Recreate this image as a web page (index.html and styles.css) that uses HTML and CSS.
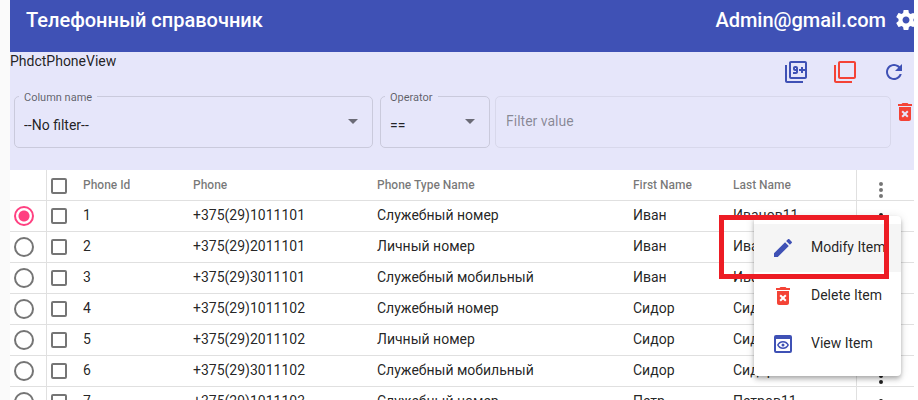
FILE: index.html
```html
<!DOCTYPE html>
<html lang="ru">
<head>
<meta charset="utf-8">
<title>Телефонный справочник</title>
<link rel="stylesheet" href="styles.css">
</head>
<body>
<svg class="defs" aria-hidden="true">
  <symbol id="i-more" viewBox="0 0 24 24"><path d="M12 8a2 2 0 1 0 0-4 2 2 0 0 0 0 4zm0 2a2 2 0 1 0 0 4 2 2 0 0 0 0-4zm0 6a2 2 0 1 0 0 4 2 2 0 0 0 0-4z"/></symbol>
  <symbol id="i-delete" viewBox="0 0 24 24"><path d="M6 19c0 1.100.9 2 2 2h8c1.100 0 2-.9 2-2V7H6v12zm2.460-7.120 1.410-1.410L12 12.590l2.120-2.120 1.410 1.410L13.410 14l2.120 2.120-1.410 1.410L12 15.410l-2.120 2.120-1.410-1.410L10.590 14l-2.130-2.120zM15.500 4l-1-1h-5l-1 1H5v2h14V4z"/></symbol>
</svg>
<header class="appbar">
  <h1 class="title">Телефонный справочник</h1>
  <span class="user">Admin@gmail.com</span>
  <button class="icon-btn settings" aria-label="Settings"><svg class="icon" viewBox="0 0 24 24"><path d="M19.430 12.980c.040-.320.070-.640.070-.980s-.030-.660-.070-.980l2.110-1.650c.190-.150.240-.420.120-.640l-2-3.460c-.120-.220-.390-.300-.610-.220l-2.490 1c-.520-.400-1.080-.730-1.690-.980l-.380-2.650C14.460 2.180 14.250 2 14 2h-4c-.250 0-.460.180-.490.420l-.380 2.650c-.610.250-1.170.590-1.690.980l-2.490-1c-.230-.090-.490 0-.610.220l-2 3.460c-.130.220-.070.490.120.640l2.110 1.650c-.040.320-.070.650-.070.980s.030.660.070.980l-2.110 1.650c-.190.150-.240.420-.120.640l2 3.460c.120.220.390.300.610.220l2.490-1c.520.400 1.080.730 1.690.980l.380 2.650c.030.240.240.420.490.420h4c.250 0 .460-.180.490-.420l.380-2.650c.610-.250 1.170-.590 1.690-.980l2.490 1c.230.090.490 0 .610-.220l2-3.460c.120-.220.070-.490-.120-.640l-2.110-1.650zM12 15.500c-1.930 0-3.500-1.570-3.500-3.500s1.570-3.500 3.500-3.500 3.500 1.570 3.500 3.500-1.570 3.500-3.500 3.500z"/></svg></button>
</header>
<section class="panel">
  <div class="panel-head">
    <span class="view-name">PhdctPhoneView</span>
    <div class="tools">
      <button class="icon-btn primary" aria-label="Filter count"><svg class="icon" viewBox="0 0 24 24"><path d="M3 5H1v16c0 1.100.9 2 2 2h16v-2H3V5zm11 7V8c0-1.110-.9-2-2-2h-1c-1.100 0-2 .890-2 2v1c0 1.110.9 2 2 2h1v1H9v2h3c1.100 0 2-.890 2-2zm-3-3V8h1v1h-1zm10-8H7c-1.100 0-2 .9-2 2v14c0 1.100.9 2 2 2h14c1.100 0 2-.9 2-2V3c0-1.100-.9-2-2-2zm0 8h-2V7h-2v2h-2v2h2v2h2v-2h2v6H7V3h14v6z"/></svg></button>
      <button class="icon-btn warn" aria-label="Clear filters"><svg class="icon" viewBox="0 0 24 24"><path d="M3 5H1v16c0 1.100.9 2 2 2h16v-2H3V5zm18-4H7c-1.100 0-2 .9-2 2v14c0 1.100.9 2 2 2h14c1.100 0 2-.9 2-2V3c0-1.100-.9-2-2-2zm0 16H7V3h14v14z"/></svg></button>
      <button class="icon-btn primary" aria-label="Refresh"><svg class="icon" viewBox="0 0 24 24"><path d="M17.650 6.350C16.200 4.900 14.210 4 12 4c-4.420 0-7.990 3.580-7.990 8s3.570 8 7.990 8c3.730 0 6.840-2.550 7.730-6h-2.080c-.820 2.330-3.040 4-5.650 4-3.310 0-6-2.690-6-6s2.690-6 6-6c1.660 0 3.140.690 4.220 1.780L13 11h7V4l-2.350 2.350z"/></svg></button>
    </div>
  </div>
  <form class="filters">
    <div class="field field-column">
      <label for="column">Column name</label>
      <select id="column"><option>--No filter--</option></select>
    </div>
    <div class="field field-operator">
      <label for="operator">Operator</label>
      <select id="operator"><option>==</option></select>
    </div>
    <div class="field field-value">
      <input type="text" placeholder="Filter value" aria-label="Filter value" disabled>
    </div>
    <button type="button" class="icon-btn warn remove" aria-label="Remove filter"><svg class="icon"><use href="#i-delete"/></svg></button>
  </form>
</section>
<main class="grid">
  <table>
    <colgroup><col class="c-radio"><col class="c-check"><col class="c-id"><col class="c-phone"><col class="c-type"><col class="c-name"><col><col class="c-menu"></colgroup>
    <thead>
      <tr><th class="pick"></th><th><input type="checkbox" aria-label="Select all"></th><th>Phone Id</th><th>Phone</th><th>Phone Type Name</th><th>First Name</th><th>Last Name</th><th class="more"><button class="icon-btn" aria-label="Table menu"><svg class="icon"><use href="#i-more"/></svg></button></th></tr>
    </thead>
    <tbody>
      <tr><td class="pick"><input type="radio" name="row" aria-label="Row 1" checked></td><td><input type="checkbox" aria-label="Select 1"></td><td>1</td><td>+375(29)1011101</td><td>Служебный номер</td><td>Иван</td><td>Иванов11</td><td class="more"><button class="icon-btn" aria-label="Row menu"><svg class="icon"><use href="#i-more"/></svg></button></td></tr>
      <tr><td class="pick"><input type="radio" name="row" aria-label="Row 2"></td><td><input type="checkbox" aria-label="Select 2"></td><td>2</td><td>+375(29)2011101</td><td>Личный номер</td><td>Иван</td><td>Иванов11</td><td class="more"><button class="icon-btn" aria-label="Row menu"><svg class="icon"><use href="#i-more"/></svg></button></td></tr>
      <tr><td class="pick"><input type="radio" name="row" aria-label="Row 3"></td><td><input type="checkbox" aria-label="Select 3"></td><td>3</td><td>+375(29)3011101</td><td>Служебный мобильный</td><td>Иван</td><td>Иванов11</td><td class="more"><button class="icon-btn" aria-label="Row menu"><svg class="icon"><use href="#i-more"/></svg></button></td></tr>
      <tr><td class="pick"><input type="radio" name="row" aria-label="Row 4"></td><td><input type="checkbox" aria-label="Select 4"></td><td>4</td><td>+375(29)1011102</td><td>Служебный номер</td><td>Сидор</td><td>Сидоров11</td><td class="more"><button class="icon-btn" aria-label="Row menu"><svg class="icon"><use href="#i-more"/></svg></button></td></tr>
      <tr><td class="pick"><input type="radio" name="row" aria-label="Row 5"></td><td><input type="checkbox" aria-label="Select 5"></td><td>5</td><td>+375(29)2011102</td><td>Личный номер</td><td>Сидор</td><td>Сидоров11</td><td class="more"><button class="icon-btn" aria-label="Row menu"><svg class="icon"><use href="#i-more"/></svg></button></td></tr>
      <tr><td class="pick"><input type="radio" name="row" aria-label="Row 6"></td><td><input type="checkbox" aria-label="Select 6"></td><td>6</td><td>+375(29)3011102</td><td>Служебный мобильный</td><td>Сидор</td><td>Сидоров11</td><td class="more"><button class="icon-btn" aria-label="Row menu"><svg class="icon"><use href="#i-more"/></svg></button></td></tr>
      <tr><td class="pick"><input type="radio" name="row" aria-label="Row 7"></td><td><input type="checkbox" aria-label="Select 7"></td><td>7</td><td>+375(29)1011103</td><td>Служебный номер</td><td>Петр</td><td>Петров11</td><td class="more"><button class="icon-btn" aria-label="Row menu"><svg class="icon"><use href="#i-more"/></svg></button></td></tr>
    </tbody>
  </table>
  <div class="menu" role="menu">
    <button class="item active" role="menuitem"><svg class="icon primary" viewBox="0 0 24 24"><path d="M3 17.250V21h3.750L17.810 9.940l-3.750-3.750L3 17.250zM20.710 7.040c.390-.390.390-1.020 0-1.410l-2.340-2.340c-.390-.390-1.020-.390-1.410 0l-1.830 1.830 3.750 3.750 1.830-1.830z"/></svg><span>Modify Item</span></button>
    <button class="item" role="menuitem"><svg class="icon warn"><use href="#i-delete"/></svg><span>Delete Item</span></button>
    <button class="item" role="menuitem"><svg class="icon primary" viewBox="0 0 24 24"><path d="M19 3H5a2 2 0 0 0-2 2v14a2 2 0 0 0 2 2h14a2 2 0 0 0 2-2V5a2 2 0 0 0-2-2zm0 16H5V7h14v12zM12 10.500c1.840 0 3.480.960 4.340 2.500-.860 1.540-2.500 2.500-4.340 2.500S8.520 14.540 7.660 13c.860-1.540 2.500-2.500 4.340-2.500zM12 9c-2.730 0-5.060 1.660-6 4 .94 2.340 3.270 4 6 4s5.060-1.660 6-4c-.94-2.340-3.270-4-6-4zm0 5.500a1.500 1.500 0 1 1 0-3 1.500 1.500 0 0 1 0 3z"/></svg><span>View Item</span></button>
  </div>
  <div class="highlight"></div>
</main>
</body>
</html>
```

FILE: styles.css
```css
* { box-sizing: border-box; }

html, body { height: 100%; overflow: hidden; }

html { background: #fff; }

body {
  margin: 0 4px 0 0;
  padding-left: 10px;
  background: #fafafa;
  color: rgba(0, 0, 0, 0.87);
  font: 14px/20px Roboto, "Liberation Sans", sans-serif;
}

button, input, select { font: inherit; color: inherit; }

.defs { display: none; }

.icon { width: 24px; height: 24px; fill: currentColor; display: block; flex: none; }

.icon-btn { border: 0; padding: 0; background: none; cursor: pointer; }

.primary { color: #3f51b5; }
.warn { color: #f44336; }

.appbar {
  display: flex;
  align-items: center;
  gap: 8px;
  height: 52px;
  padding: 0 0 12px 16px;
  background: #3f51b5;
  color: #fff;
  font-size: 20px;
  font-weight: 500;
}

.title { margin: 0 auto 0 0; font: inherit; }

.settings { margin-right: -4px; }

.panel { height: 118px; background: #e6e6fa; }

.panel-head { display: flex; justify-content: space-between; height: 44px; line-height: 18px; }

.tools { display: flex; gap: 25px; padding: 8px 8px 0 0; align-items: flex-start; }

.filters { display: flex; align-items: flex-start; padding-left: 4px; }

.field {
  position: relative;
  height: 52px;
  border: 1px solid #cacadc;
  border-radius: 5px;
}

.field-column { flex: 0 1 359px; margin-right: 7px; }
.field-operator { flex: 0 0 110px; margin-right: 5px; }
.field-value { flex: 1; border-color: #d8d8eb; }

.field label {
  position: absolute;
  top: -7px;
  left: 4px;
  padding: 0 5px;
  background: #e6e6fa;
  color: rgba(0, 0, 0, 0.6);
  font-size: 11px;
  line-height: 16px;
}

.field select, .field input {
  display: block;
  width: 100%;
  height: 48px;
  padding: 0 10px;
  border: 0;
  background: none;
  appearance: none;
}

.field select { padding: 8px 9px 0; opacity: 1; }

.field input::placeholder { color: rgba(0, 0, 0, 0.42); }

.field:has(select)::after {
  content: "";
  position: absolute;
  top: 22px;
  right: 14px;
  border: 5px solid transparent;
  border-top-color: #6b6b76;
  border-bottom: 0;
}

.remove { margin: 4px -3px 0 2px; }

.grid { position: relative; background: #fff; }

table { width: 100%; table-layout: fixed; border-collapse: separate; border-spacing: 0; }

.c-radio { width: 37px; }
.c-check { width: 36px; }
.c-id { width: 110px; }
.c-phone { width: 184px; }
.c-type { width: 256px; }
.c-name { width: 100px; }
.c-menu { width: 58px; }

th, td {
  height: 31px;
  padding: 0 0 2px;
  border-bottom: 1px solid #e0e0e0;
  text-align: left;
  white-space: nowrap;
  line-height: 20px;
}

th { padding: 0; color: rgba(0, 0, 0, 0.54); font-size: 12px; font-weight: 500; }

.pick { border-right: 1px solid #e0e0e0; }

th input, td input { display: block; appearance: none; margin: 2px 0 0 4px; border: 2px solid #757575; }

input[type="checkbox"] { width: 16px; height: 16px; border-radius: 2px; }

input[type="radio"] { width: 20px; height: 20px; border-radius: 50%; }

input[type="radio"]:checked {
  border-color: #ff4081;
  background: radial-gradient(circle, #ff4081 5px, transparent 6px);
}

.more { border-left: 1px solid #e0e0e0; padding: 8px 0 0 12px; }
.more .icon-btn { display: block; height: 22px; }

.menu {
  position: absolute;
  top: 46px;
  right: 13px;
  width: 147px;
  padding: 8px 0;
  border-radius: 4px;
  background: #fff;
  box-shadow: 0 2px 4px -1px rgba(0, 0, 0, 0.2), 0 4px 5px rgba(0, 0, 0, 0.14), 0 1px 10px rgba(0, 0, 0, 0.12);
}

.item {
  display: flex;
  align-items: center;
  gap: 16px;
  width: 100%;
  height: 48px;
  padding: 0 16px 0 17px;
  border: 0;
  background: none;
  white-space: nowrap;
}

.item span { padding-bottom: 2px; }

.item.active { background: #f5f5f5; }

.highlight {
  position: absolute;
  top: 45px;
  right: 25px;
  width: 170px;
  height: 64px;
  border: 5px solid #ed1c24;
  pointer-events: none;
}
```
